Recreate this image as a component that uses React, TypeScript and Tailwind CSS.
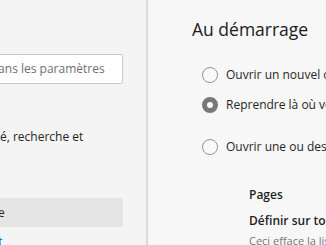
type NavItem = {
  label: string;
  active?: boolean;
  link?: boolean;
  tall?: boolean;
};

const navItems: NavItem[] = [
  { label: "Profils" },
  { label: "Confidentialité, recherche et services", tall: true },
  { label: "Apparence" },
  { label: "Au démarrage", active: true },
  { label: "Nouvel onglet", link: true },
];

function Radio({ checked = false }: { checked?: boolean }) {
  return (
    <span
      className={
        checked
          ? "block h-[16px] w-[16px] shrink-0 rounded-full border-[5px] border-[#787878] bg-white"
          : "block h-[16px] w-[16px] shrink-0 rounded-full border-[1.5px] border-[#949494] bg-[#fafafa]"
      }
    />
  );
}

export default function App() {
  return (
    <div className="flex h-[245px] w-[326px] overflow-hidden font-['Open_Sans',sans-serif]">
      {/* sidebar, scrolled past its left part */}
      <div className="w-[146px] shrink-0 overflow-hidden bg-[#f4f4f4]">
        <div className="ml-[-137px] w-[260px] pt-[54px]">
          <div className="flex h-[30px] items-center whitespace-nowrap rounded-[2px] border border-[#c8c8c8] bg-white pl-[60px] text-[12px] text-[#707070]">
            Rechercher dans les paramètres
          </div>
          <nav className="mt-[10px] flex flex-col">
            {navItems.map((item) => (
              <div
                key={item.label}
                className={
                  item.tall
                    ? "py-[5px] pl-[62px] pr-[12px] text-[12px] leading-[18px] text-[#262626]"
                    : item.active
                      ? "flex h-[29px] items-center whitespace-nowrap rounded-[2px] bg-[#e5e5e5] pl-[62px] text-[12px] text-[#1f1f1f]"
                      : item.link
                        ? "flex h-[29px] items-center whitespace-nowrap pl-[62px] text-[12px] text-[#0067b8]"
                        : "flex h-[29px] items-center whitespace-nowrap pl-[62px] text-[12px] text-[#262626]"
                }
              >
                {item.label}
              </div>
            ))}
          </nav>
        </div>
      </div>
      <div className="w-[2px] shrink-0 bg-[#dcdcdc]" />

      {/* content */}
      <div className="min-w-0 flex-1 overflow-hidden bg-[#f7f7f7] pl-[44px] pt-[17px]">
        <h1 className="whitespace-nowrap text-[17.5px] leading-[24px] text-[#1b1b1b]">
          Au démarrage
        </h1>
        <div className="mt-[19px] flex flex-col text-[12px] text-[#262626]">
          <label className="ml-[10px] flex h-[30px] items-center gap-[8px] whitespace-nowrap">
            <Radio />
            Ouvrir un nouvel onglet
          </label>
          <label className="ml-[10px] flex h-[30px] items-center gap-[8px] whitespace-nowrap">
            <Radio checked />
            Reprendre là où vous vous étiez arrêté
          </label>
          <label className="ml-[10px] mt-[12px] flex h-[30px] items-center gap-[8px] whitespace-nowrap">
            <Radio />
            Ouvrir une ou des pages spécifiques
          </label>
        </div>
        <div className="ml-[57px] mt-[19px] whitespace-nowrap">
          <div className="flex h-[28px] items-center text-[12px] font-semibold text-[#1f1f1f]">
            Pages
          </div>
          <div className="flex h-[24px] items-center text-[12px] font-semibold text-[#1f1f1f]">
            Définir sur toutes les pages ouvertes
          </div>
          <div className="flex h-[16px] items-center text-[11px] text-[#767676]">
            Ceci efface la liste et la remplace par tous les onglets ouverts
          </div>
        </div>
      </div>
    </div>
  );
}
